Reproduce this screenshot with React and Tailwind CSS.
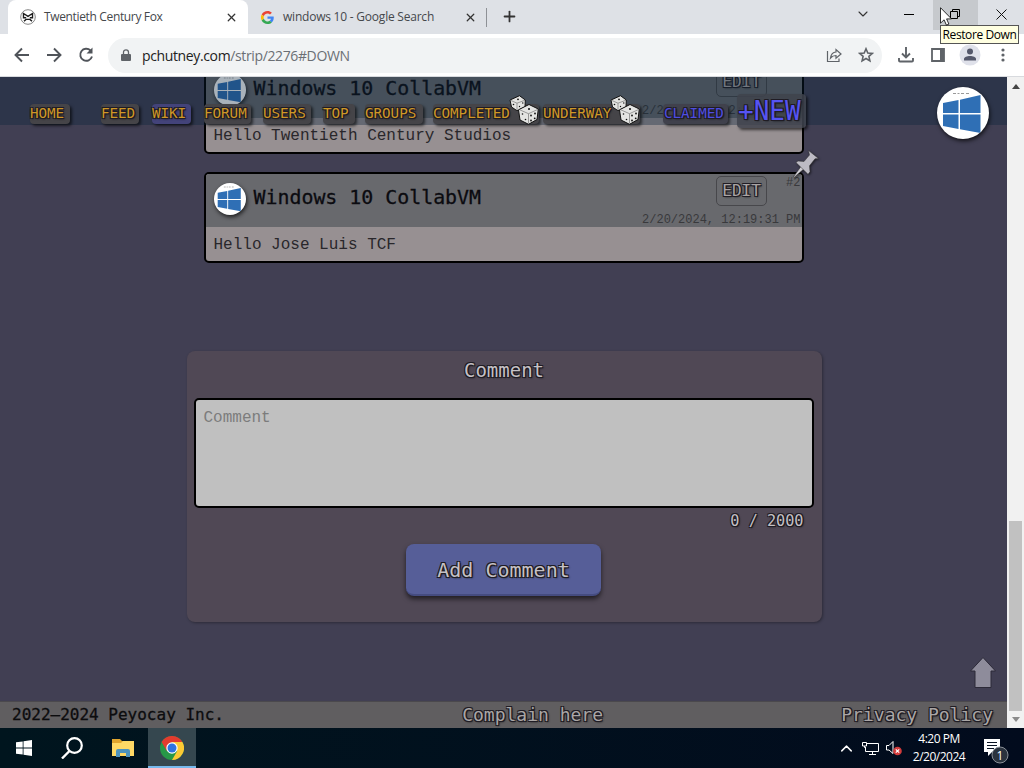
import React from 'react'
import { ChevronDown, ChevronUp, Plus, X } from 'lucide-react'

const OUTLINE = '[text-shadow:-1px_-1px_0_#1f1c24,1px_-1px_0_#1f1c24,-1px_1px_0_#1f1c24,1px_1px_0_#1f1c24,1px_1px_2px_#111]'

const NAV_ITEMS = [
    { label: 'HOME', box: 'w-[40px] ml-[30px]' },
    { label: 'FEED', box: 'w-[38px] ml-[31px]' },
    { label: 'WIKI', box: 'w-[39px] ml-[13px] bg-[#43437a]' },
    { label: 'FORUM', box: 'w-[47px] ml-[13px]' },
    { label: 'USERS', box: 'w-[48px] ml-[12px]' },
    { label: 'TOP', box: 'w-[32px] ml-[12px]' },
    { label: 'GROUPS', box: 'w-[58px] ml-[10px]' },
    { label: 'COMPLETED', box: 'w-[106px] ml-[10px]', dice: true },
    { label: 'UNDERWAY', box: 'w-[97px] ml-[4px]', dice: true },
]

const COMMENTS = [
    { id: 1, author: 'Windows 10 CollabVM', date: '2/20/2024, 12:19:11 PM', text: 'Hello Twentieth Century Studios' },
    { id: 2, author: 'Windows 10 CollabVM', date: '2/20/2024, 12:19:31 PM', text: 'Hello Jose Luis TCF', pinned: true },
]

function GoogleIcon() {
    return (
        <svg viewBox="0 0 48 48" className="w-[13px] h-[13px]">
            <path fill="#EA4335" d="M24 9.5c3.5 0 6.7 1.2 9.2 3.6l6.9-6.9C35.9 2.4 30.5 0 24 0 14.6 0 6.5 5.4 2.6 13.2l8 6.2C12.4 13.7 17.7 9.5 24 9.5z" />
            <path fill="#4285F4" d="M47 24.6c0-1.6-.2-3.1-.4-4.6H24v9h12.9c-.6 3-2.3 5.5-4.8 7.2l7.7 6C44.4 38 47 31.8 47 24.6z" />
            <path fill="#FBBC05" d="M10.5 28.6a14.5 14.5 0 0 1 0-9.2l-8-6.2a24 24 0 0 0 0 21.6z" />
            <path fill="#34A853" d="M24 48c6.5 0 11.9-2.1 15.9-5.8l-7.7-6A14.4 14.4 0 0 1 10.5 28.6l-8 6.2C6.5 42.6 14.6 48 24 48z" />
        </svg>
    )
}

function FaceIcon() {
    return (
        <svg viewBox="0 0 16 16" className="w-4 h-4">
            <circle cx="8" cy="8" r="7.3" fill="#fff" stroke="#777" strokeWidth=".9" />
            <path d="M2.8 4 8 7.3 13.2 4M3.5 4.5v4.2h2.7M12.5 4.5v4.2H9.8" fill="none" stroke="#1c1c1c" strokeWidth="1.4" />
            <path d="M4 12.3 6 10.4h4l2 1.9" fill="none" stroke="#1c1c1c" strokeWidth="1.4" />
        </svg>
    )
}

function Avatar({ className }) {
    return (
        <svg viewBox="0 0 52 52" className={`rounded-full bg-white shadow-[1px_2px_4px_#000b] ${className}`}>
            <path d="M6 16 21.5 13v13H6zM23 12.7 43.5 8v18H23zM6 27.5h15.5V42L6 39zM23 27.5h20.5V46L23 42.3z" fill="#2f6fb5" />
            <path d="M16 6.5h3M20.5 6.5h2M24 6.5h3M29 6.5h3" stroke="#999" strokeWidth="1.2" />
        </svg>
    )
}

function Dice({ className }) {
    return (
        <svg viewBox="0 0 30 30" className={className}>
            <g stroke="#111" strokeWidth="1" strokeLinejoin="round" fill="#e4e4e2">
                <path d="M1 5 10.5.7 16.3 5 16 12 8 15.7 2.5 12z" />
                <path d="M9.5 15 10 14.5 20 9.500 29.3 14 28 24.5 19.5 29.3 11 25z" />
            </g>
            <g stroke="#777" strokeWidth=".7" fill="none">
                <path d="M1.5 5.3 8 8.2l8-3M8 8.2v7M10.5 14.7l9 4 9.3-4.3M19.5 18.7v10" />
            </g>
            <g fill="#111">
                <circle cx="9" cy="4.3" r=".9" />
                <circle cx="4.5" cy="9.5" r=".8" />
                <circle cx="10.5" cy="11.5" r=".7" />
                <circle cx="13.8" cy="8" r=".7" />
                <circle cx="20" cy="14" r="1" />
                <circle cx="13.5" cy="19" r=".8" />
                <circle cx="16.5" cy="24.5" r=".8" />
                <circle cx="22" cy="20.5" r=".9" />
                <circle cx="26" cy="18.5" r=".9" />
                <circle cx="22" cy="25.5" r=".9" />
                <circle cx="25.7" cy="23.3" r=".9" />
            </g>
        </svg>
    )
}

function Tab({ icon, title, active }) {
    return (
        <div className={`flex items-center h-full ${active ? 'w-[240px] pl-3 rounded-t-lg bg-white' : 'w-[238px] pl-[13px]'}`}>
            {icon}
            <span className={`flex-1 whitespace-nowrap text-[12px] text-[#45484c] ${active ? 'ml-2 tracking-[-0.35px]' : 'ml-[9px] tracking-[-0.22px]'}`}>{title}</span>
            <X className={`w-[13px] h-[13px] text-[#333] ${active ? 'mr-[10px]' : 'mr-[9px]'}`} strokeWidth={2.3} />
        </div>
    )
}

function TabStrip() {
    return (
        <div className="flex h-[34px] pl-2 bg-[#dee1e6]">
            <Tab active icon={<FaceIcon />} title="Twentieth Century Fox" />
            <Tab icon={<GoogleIcon />} title="windows 10 - Google Search" />
            <div className="w-px h-[19px] mt-2 bg-[#8e9196]" />
            <Plus className="w-[17px] h-[17px] mt-[8px] ml-[14px] text-[#333]" strokeWidth={2.5} />
            <div className="flex flex-1 justify-end">
                <div className="w-[46px] flex justify-center pt-[6px]"><ChevronDown className="w-4 h-4 -ml-[2px] text-[#333]" strokeWidth={1.6} /></div>
                <div className="w-[46px] flex justify-center pt-[14px]"><div className="w-[10px] h-px -ml-[2px] bg-black" /></div>
                <div className="w-[45px] h-[30px] flex justify-center pt-[9px] bg-[#c6c9cd]">
                    <svg viewBox="0 0 10 10" className="w-[10px] h-[10px] -ml-[2px]" fill="none" stroke="#000"><path d="M.5 2.500h7v7h-7zM2.5 2.500v-2h7v7h-2" /></svg>
                </div>
                <div className="w-[46px] flex justify-center pt-[9px]">
                    <svg viewBox="0 0 11 11" className="w-[11px] h-[11px]" stroke="#111"><path d="M.5.5l10 10M10.5.5l-10 10" /></svg>
                </div>
            </div>
        </div>
    )
}

function Toolbar() {
    return (
        <div className="flex items-center h-[43px] bg-white border-b border-[#d8dade] text-[#5f6368]">
            <svg viewBox="0 0 84 18" className="w-[84px] h-[18px] ml-[13px]" fill="none" stroke="#50545a" strokeWidth="1.9">
                <path d="M16 9H3M9 2.5 2.5 9 9 15.5M34 9h13M41 2.5 47.5 9 41 15.5" />
                <path d="M77.5 4.5A6 6 0 1 0 79 10.5" />
                <path d="M79.5 1.5v6h-6z" fill="#50545a" stroke="none" />
            </svg>
            <div className="flex items-center w-[774px] h-[35px] ml-[11px] pl-[13px] rounded-full bg-[#f1f3f4]">
                <svg viewBox="0 0 10 13" className="w-[10px] h-[13px]"><path d="M1 5h8q1 0 1 1v5q0 1-1 1H1q-1 0-1-1V6q0-1 1-1z" fill="#5f6368" /><path d="M2.5 5V3.3a2.5 2.5 0 0 1 5 0V5" fill="none" stroke="#5f6368" strokeWidth="1.3" /></svg>
                <div className="flex-1 ml-[11px] text-[14px] tracking-[-0.37px] text-[#6b6f74]"><span className="text-[#222]">pchutney.com</span>/strip/2276#DOWN</div>
                <svg viewBox="0 0 16 16" className="w-4 h-4 mr-[16px]" fill="none" stroke="#5f6368" strokeWidth="1.2">
                    <path d="M1.5 4v10.5H13v-3" />
                    <path d="M4.5 11C5 7.5 7 5.2 10 5V2.5L15 7l-5 4.2V8.5C7.5 8.5 6 9.2 4.5 11z" />
                </svg>
                <svg viewBox="0 0 16 16" className="w-4 h-4 mr-[8px]" fill="none" stroke="#5f6368" strokeWidth="1.6"><path d="M8 1.8l1.8 4.2 4.5.4-3.4 3 1 4.5L8 11.5l-3.9 2.4 1-4.5-3.4-3 4.5-.4z" /></svg>
            </div>
            <svg viewBox="0 0 16 16" className="w-4 h-4 ml-4" fill="none" stroke="#5f6368" strokeWidth="1.9"><path d="M8 0v10M4 6.5l4 4 4-4M1 11v2.5q0 1 1 1h12q1 0 1-1V11" /></svg>
            <svg viewBox="0 0 14 14" className="w-[14px] h-[14px] ml-[17px]"><path d="M1 1h12v12H1z" fill="none" stroke="#5f6368" strokeWidth="1.8" /><path d="M9 1h4v12H9z" fill="#5f6368" /></svg>
            <svg viewBox="0 0 22 22" className="w-[22px] h-[22px] ml-[14px]"><circle cx="11" cy="11" r="10.5" fill="#dfe1ea" /><circle cx="11" cy="7.5" r="3" fill="#54586b" /><path d="M5 16.5v-1.5c0-2 3-3 6-3s6 1 6 3v1.5z" fill="#54586b" /></svg>
            <svg viewBox="0 0 4 16" className="w-1 h-4 ml-[20px]" fill="#5f6368"><circle cx="2" cy="3" r="1.6" /><circle cx="2" cy="8" r="1.6" /><circle cx="2" cy="13" r="1.6" /></svg>
        </div>
    )
}

function SiteNav() {
    return (
        <nav className="absolute inset-x-0 top-0 h-[48px] flex items-start bg-[#08213a]/35 text-[14.2px]">
            {NAV_ITEMS.map((item) => (
                <a key={item.label} className={`relative h-[20px] mt-[27px] leading-[19px] rounded-[4px] text-[#cf9826] shadow-[2px_2px_3px_#0009] ${OUTLINE} ${item.box} ${item.label === 'WIKI' ? '' : 'bg-[#454448]'}`}>
                    {item.label}
                    {item.dice && <Dice className="absolute right-0 -top-[9px] w-[30px] h-[30px]" />}
                </a>
            ))}
            <a className={`h-[20px] w-[65px] mt-[27px] ml-[23px] pl-px leading-[19px] rounded-[4px] bg-[#40414c] text-[#4f4ee0] shadow-[2px_2px_3px_#0009] ${OUTLINE}`}>CLAIMED</a>
            <a className={`h-[34px] w-[69px] mt-[17px] ml-[9px] pl-px leading-[34px] text-[26px] rounded-[4px] bg-[#40434c]/85 text-[#5654f2] shadow-[2px_2px_3px_#0009] ${OUTLINE}`}>+NEW</a>
            <Avatar className="w-[52px] h-[52px] mt-[10px] ml-auto mr-[18px]" />
        </nav>
    )
}

function CommentCard({ comment }) {
    return (
        <article className="relative w-[600px] h-[91px] border-2 border-black rounded-[5px] bg-[#979092]">
            <header className="flex h-[53px] bg-[#68696d] rounded-t-[3px]">
                <Avatar className="w-8 h-8 mt-[9px] ml-2" />
                <h3 className="flex-1 mt-[9px] ml-[8px] text-[19.9px] leading-[30px] text-[#0b0b10] [-webkit-text-stroke:0.3px_#0b0b10]">{comment.author}</h3>
                <div className="flex flex-col items-end pr-px text-[12px] text-[#39393c] font-['Liberation_Mono',monospace]">
                    <div className="flex">
                        <button className={`w-[51px] h-[30px] mt-[2px] mr-[19px] border border-[#47474b] rounded-[5px] text-[16px] text-[#aaa4a4] font-['DejaVu_Sans_Mono',monospace] ${OUTLINE}`}>EDIT</button>
                        <span>#{comment.id}</span>
                    </div>
                    <time className="mt-[6px] leading-4">{comment.date}</time>
                </div>
            </header>
            <p className="pl-[8px] pt-[6px] text-[16px] leading-6 text-[#29272b] font-['Liberation_Mono',monospace]">{comment.text}</p>
            {comment.pinned && (
                <svg viewBox="0 0 26 30" className="absolute left-[587px] -top-[25px] w-[26px] h-[30px] drop-shadow-[1px_1px_1px_#0008]">
                    <path d="M9 16 .7 27.5l.8.5L12 19z" fill="#d0ced4" stroke="#222" strokeWidth=".5" />
                    <path d="M15.5 1.5 25.5 9.500l-3.500.3-5.500 7 .5 6-2 2.500L3 13.5l2-1.500 6 .5 5.500-6.500z" fill="#bdbbc4" stroke="#333" strokeWidth=".5" />
                </svg>
            )}
        </article>
    )
}

function CommentForm() {
    return (
        <section className="flex flex-col items-center w-[635px] h-[271px] mt-[88px] ml-px rounded-[8px] bg-[#504855] shadow-[1px_1px_3px_#0005] text-[#c5c1c5]">
            <h2 className={`mt-[6px] text-[19px] leading-[26px] ${OUTLINE}`}>Comment</h2>
            <textarea placeholder="Comment" className="w-[620px] h-[110px] mt-[15px] -ml-px px-[8px] py-[6px] block resize-none border-2 border-black rounded-[5px] bg-[#c0c0c0] text-[16px] leading-6 placeholder:text-[#7c7c7c] font-['Liberation_Mono',monospace]" />
            <div className={`self-end mr-[18px] mt-[2px] text-[15.2px] leading-[22px] ${OUTLINE}`}>0 / 2000</div>
            <button className={`w-[195px] h-[52px] mt-[12px] -ml-px pt-[2px] rounded-[8px] bg-[#565e98] border-b-2 border-[#454c80] text-[20px] shadow-[0_3px_5px_#0009] ${OUTLINE}`}>Add Comment</button>
        </section>
    )
}

function Page() {
    return (
        <main className="relative flex flex-col items-center flex-1 overflow-hidden bg-[#413f53] font-['DejaVu_Sans_Mono',monospace]">
            <div className="flex flex-col gap-[18px] -mt-[14px]">
                {COMMENTS.map((comment) => <CommentCard key={comment.id} comment={comment} />)}
            </div>
            <CommentForm />
            <footer className="flex justify-between w-full h-[27px] mt-auto pl-3 pr-[14px] bg-[#605e60] border-t border-[#4b494d] text-[18px] leading-[26px]">
                <span className="text-[16px] text-[#0c0c0e] leading-[25px] [-webkit-text-stroke:0.3px_#0c0c0e]">2022–2024 Peyocay Inc.</span>
                <a className={`text-[#aaa6a6] ${OUTLINE}`}>Complain here</a>
                <a className={`text-[#aaa6a6] ${OUTLINE}`}>Privacy Policy</a>
            </footer>
            <SiteNav />
            <svg viewBox="0 0 26 31" className="absolute right-[11px] bottom-[40px] w-[26px] h-[31px]"><path d="M13 .5 25.5 14H21v16.5H5V14H.5z" fill="#8e8c9b" stroke="#2c2a38" /></svg>
        </main>
    )
}

function Scrollbar() {
    return (
        <div className="flex flex-col items-center w-[17px] bg-[#f1f1f1]">
            <svg viewBox="0 0 8 5" className="w-2 h-[5px] mt-[7px]"><path d="M0 5 4 0l4 5z" fill="#444" /></svg>
            <div className="w-[13px] h-[190px] mt-auto bg-[#c1c1c1]" />
            <svg viewBox="0 0 8 5" className="w-2 h-[5px] mt-[6px] mb-[6px]"><path d="M0 0l4 5 4-5z" fill="#8a8a8a" /></svg>
        </div>
    )
}

function Taskbar() {
    return (
        <div className="flex h-10 bg-linear-to-r from-[#00151e] to-[#020b1d] text-white">
            <div className="w-12 flex items-center justify-center">
                <svg viewBox="0 0 16 16" className="w-4 h-4" fill="#fff"><path d="M0 2.3 6.7 1.4v6.2H0zM7.5 1.2 16 0v7.6H7.5zM0 8.4h6.7v6.2L0 13.7zM7.5 8.4H16V16l-8.5-1.2z" /></svg>
            </div>
            <div className="w-12 flex items-center justify-center">
                <svg viewBox="0 0 22 22" className="w-[22px] h-[22px]" fill="none" stroke="#fff"><circle cx="13.5" cy="8.5" r="7.3" strokeWidth="2.2" /><path d="M8.5 14 1 21.5" strokeWidth="2.4" /></svg>
            </div>
            <div className="w-[52px] flex items-center justify-center">
                <svg viewBox="0 0 22 18" className="w-[22px] h-[18px] ml-px"><path d="M0 0h8l2 2h11v15H0z" fill="#e0a52e" /><path d="M0 4h9l2-2h11v15H0z" fill="#ffd965" /><path d="M4 18v-6q0-2 2-2h10q2 0 2 2v6h-4v-4H8v4z" fill="#4d93bd" /></svg>
            </div>
            <div className="w-12 flex items-center justify-center bg-[#35474f] border-b-2 border-[#76b9ed]">
                <svg viewBox="0 0 24 24" className="w-6 h-6 mt-[2px]">
                    <circle cx="12" cy="12" r="12" fill="#279847" />
                    <path d="M12 6h10.4A12 12 0 0 1 12 24l5.2-9z" fill="#fcc934" />
                    <path d="M1.6 6A12 12 0 0 1 22.4 6H12L6.8 15z" fill="#e33b2e" />
                    <circle cx="12" cy="12" r="5.7" fill="#fff" />
                    <circle cx="12" cy="12" r="4.5" fill="#2f73e0" />
                </svg>
            </div>
            <div className="flex flex-1 items-center justify-end">
                <ChevronUp className="w-[19px] h-[19px]" strokeWidth={1.8} />
                <svg viewBox="0 0 17 15" className="w-[17px] h-[15px] ml-[6px]" fill="none" stroke="#fff"><path d="M5 2.5h11.5v8H3.5V6M7 13.5h7M10.5 10.5v3M.5 1.5h4V5h-4zM2.5 5v1.5h1" /></svg>
                <svg viewBox="0 0 17 16" className="w-[17px] h-4 ml-[7px]"><path d="M.5 5.5h2.5L7 1.5v12L3 10H.5z" fill="none" stroke="#fff" /><circle cx="11.5" cy="11" r="4.3" fill="#d33b3b" /><path d="M9.8 9.3l3.4 3.4M13.2 9.3l-3.4 3.4" stroke="#fff" strokeWidth="1.2" /></svg>
                <div className="w-[60px] ml-[6px] text-center text-[12px] leading-[18px] tracking-[-0.5px] whitespace-nowrap">
                    <div>4:20 PM</div>
                    <div>2/20/2024</div>
                </div>
                <svg viewBox="0 0 26 26" className="w-[26px] h-[26px] ml-[14px] mr-[15px] mt-[6px]">
                    <path d="M1 1h16v13h-8l-4 4v-4H1z" fill="#fff" />
                    <path d="M4 4.5h10M4 7.5h10M4 10.5h7" stroke="#0a1423" />
                    <circle cx="17" cy="17" r="8" fill="#2b333e" stroke="#8a9098" />
                    <text x="17" y="21.5" fill="#fff" fontSize="12" textAnchor="middle">1</text>
                </svg>
            </div>
        </div>
    )
}

export default function App() {
    return (
        <div className="relative flex flex-col w-[1024px] h-[768px] overflow-hidden font-['Open_Sans',sans-serif]">
            <TabStrip />
            <Toolbar />
            <div className="flex flex-1 min-h-0">
                <Page />
                <Scrollbar />
            </div>
            <Taskbar />
            <div className="absolute left-[940px] top-[25px] w-[79px] h-[19px] border border-[#555] bg-[#ffffe1] text-center text-[12px] leading-[17px] tracking-[-0.4px] text-black whitespace-nowrap">Restore Down</div>
            <svg viewBox="0 0 12 19" className="absolute left-[940px] top-[7px] w-3 h-[19px]"><path d="M.5.7v15.5l3.6-3.4 2.3 5.3 2.5-1-2.3-5.2h4.9z" fill="#fff" stroke="#000" strokeWidth=".8" /></svg>
        </div>
    )
}
